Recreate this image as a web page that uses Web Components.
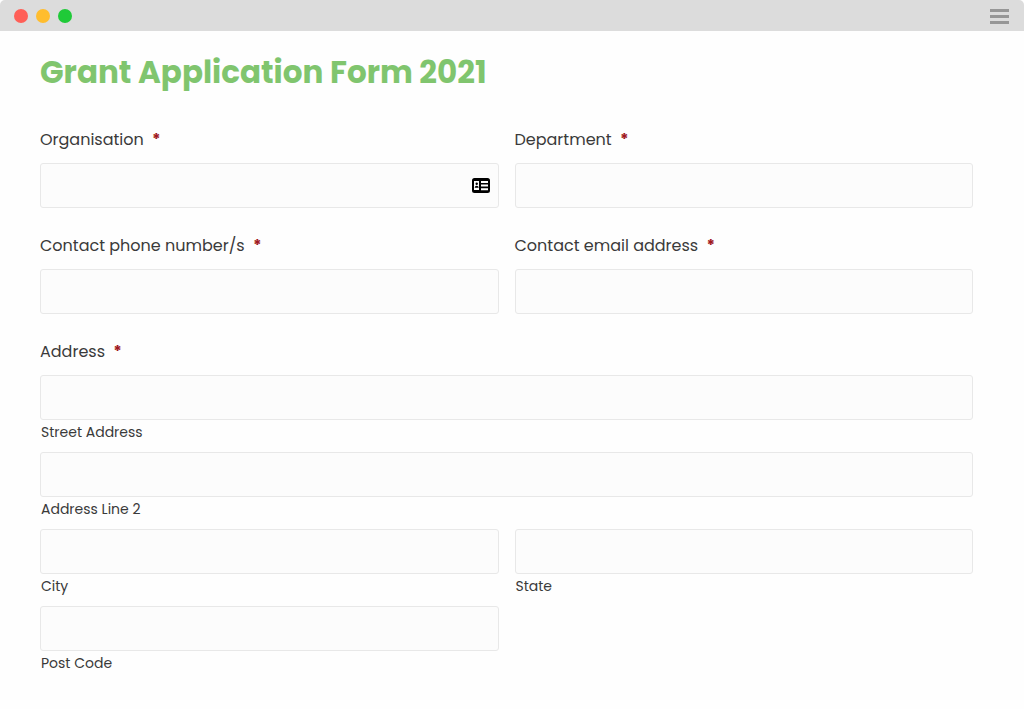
<!DOCTYPE html>
<html lang="en">
<head>
<meta charset="utf-8">
<meta name="viewport" content="width=device-width, initial-scale=1">
<title>Grant Application Form 2021</title>
<style>
body { margin: 0; background: #fefefe; color: #3a3a3a; font-family: Poppins, Inter, sans-serif; }
</style>
</head>
<body>
<browser-window>
  <grant-form></grant-form>
</browser-window>

<template id="window-template">
<style>
:host { display: block; }
header { display: flex; align-items: center; gap: 8px; height: 31px; padding: 0 14px; box-sizing: border-box; background: #dcdcdc; border-radius: 5px 5px 0 0; }
.dot { width: 14px; height: 14px; border-radius: 50%; }
.close { background: #ff5f57; }
.minimise { background: #ffbd2e; }
.zoom { background: #1fca38; }
button { display: flex; margin: 0 0 0 auto; padding: 0; border: 0; background: none; }
</style>
<header>
  <span class="dot close"></span>
  <span class="dot minimise"></span>
  <span class="dot zoom"></span>
  <button type="button" aria-label="Menu">
    <svg width="21" height="17" viewBox="0 0 21 17" fill="#969696"><path d="M1 2h19v3H1zM1 8h19v3H1zM1 14h19v3H1z"/></svg>
  </button>
</header>
<slot></slot>
</template>

<template id="field-template">
<style>
:host { display: block; min-width: 0; }
.field { display: flex; flex-direction: column; gap: 11px; }
:host([compact]) .field { flex-direction: column-reverse; gap: 0; }
label { font-size: 16px; line-height: 24px; }
:host([compact]) label { font-size: 14px; padding-left: 1px; }
.required { color: #a01822; font-weight: 700; margin-left: 4px; }
.box { display: grid; align-items: center; }
input { grid-area: 1 / 1; width: 100%; height: 45px; box-sizing: border-box; margin: 0; padding: 0 12px; border: 1px solid #e8e8e8; border-radius: 3px; background: #fcfcfc; color: inherit; font: inherit; }
svg { grid-area: 1 / 1; justify-self: end; margin-right: 9px; }
</style>
<div class="field">
  <label for="control"></label>
  <div class="box"><input id="control" type="text"></div>
</div>
</template>

<template id="form-template">
<style>
:host { display: block; padding: 20px 51px 40px 40px; }
h1 { margin: 0 0 35px; color: #80c56e; font-size: 31px; line-height: 42px; font-weight: 700; }
form, .parts { display: grid; grid-template-columns: 1fr 1fr; column-gap: 16px; }
form { row-gap: 26px; }
.parts { row-gap: 8px; }
fieldset { grid-column: 1 / -1; min-width: 0; margin: 0; padding: 0; border: 0; }
legend { padding: 0; margin-bottom: 11px; font-size: 16px; line-height: 24px; }
.required { color: #a01822; font-weight: 700; margin-left: 4px; }
.wide { grid-column: 1 / -1; }
</style>
<h1>Grant Application Form 2021</h1>
<form>
  <form-field label="Organisation" required contact-icon></form-field>
  <form-field label="Department" required></form-field>
  <form-field label="Contact phone number/s" type="tel" required></form-field>
  <form-field label="Contact email address" type="email" required></form-field>
  <fieldset>
    <legend>Address <span class="required">*</span></legend>
    <div class="parts">
      <form-field class="wide" compact label="Street Address"></form-field>
      <form-field class="wide" compact label="Address Line 2"></form-field>
      <form-field compact label="City"></form-field>
      <form-field compact label="State"></form-field>
      <form-field compact label="Post Code"></form-field>
    </div>
  </fieldset>
</form>
</template>

<script>
class TemplateElement extends HTMLElement {
  constructor() {
    super();
    this.attachShadow({ mode: 'open' })
      .append(document.getElementById(this.constructor.template).content.cloneNode(true));
  }
}

class BrowserWindow extends TemplateElement {
  static template = 'window-template';
}

class FormField extends TemplateElement {
  static template = 'field-template';
  connectedCallback() {
    const label = this.shadowRoot.querySelector('label');
    const input = this.shadowRoot.querySelector('input');
    label.textContent = this.getAttribute('label');
    input.type = this.getAttribute('type') || 'text';
    if (this.hasAttribute('required')) {
      input.required = true;
      label.insertAdjacentHTML('beforeend', ' <span class="required">*</span>');
    }
    if (this.hasAttribute('contact-icon')) {
      input.insertAdjacentHTML('afterend', `
        <svg width="18" height="15" viewBox="0 0 18 15" aria-hidden="true">
          <rect x="1" y="1" width="16" height="13" rx="1.5" fill="#000" stroke="#000" stroke-width="2"/>
          <path fill="#fff" d="M2 3h5v9H2zM9 3h7v2H9zM9 6.6h7v2H9zM9 10.2h7v2H9z"/>
          <circle cx="4.7" cy="5.8" r="1.2"/><path d="M2.7 9.8c0-2.8 4-2.8 4 0z"/>
        </svg>`);
    }
  }
}

class GrantForm extends TemplateElement {
  static template = 'form-template';
}

customElements.define('browser-window', BrowserWindow);
customElements.define('form-field', FormField);
customElements.define('grant-form', GrantForm);
</script>
</body>
</html>
